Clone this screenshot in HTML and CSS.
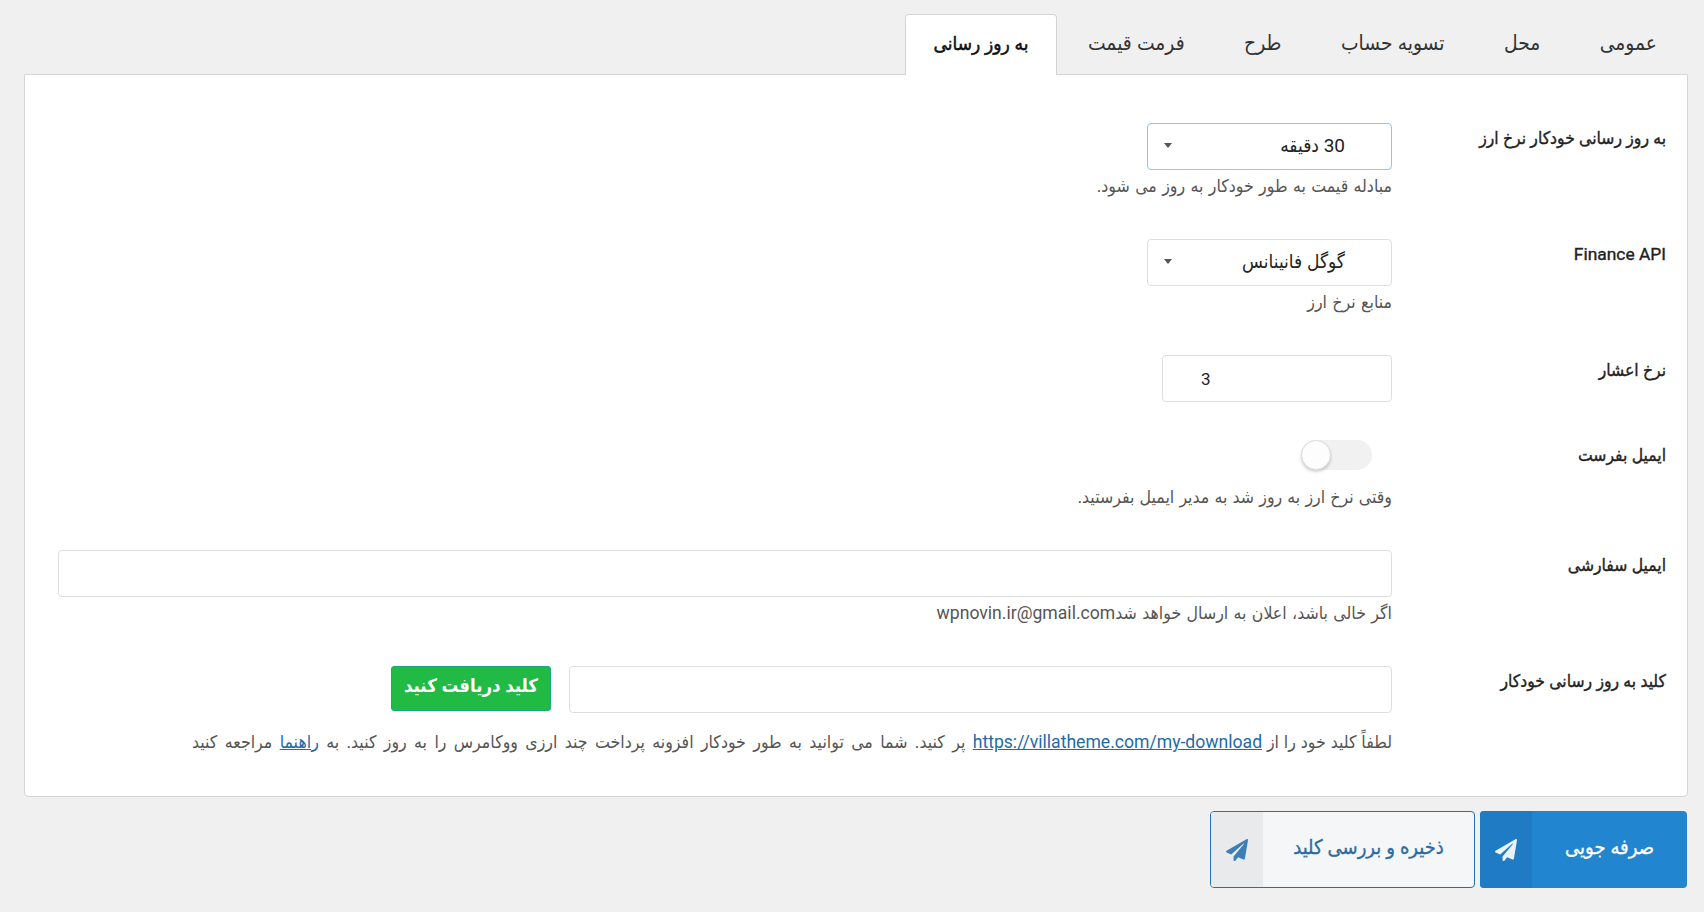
FILE: index.html
```html
<!DOCTYPE html>
<html lang="fa" dir="rtl">
<head>
<meta charset="utf-8">
<title>تنظیمات</title>
<link rel="stylesheet" href="styles.css">
</head>
<body>
<div class="wrap">
  <nav class="tabs">
    <a class="tab">عمومی</a>
    <a class="tab">محل</a>
    <a class="tab">تسویه حساب</a>
    <a class="tab">طرح</a>
    <a class="tab">فرمت قیمت</a>
    <a class="tab active">به روز رسانی</a>
  </nav>
  <section class="panel">
    <div class="row">
      <div class="label">به روز رسانی خودکار نرخ ارز</div>
      <div class="field">
        <div class="select focus"><span>30 دقیقه</span><i class="caret"></i></div>
        <p class="desc">مبادله قیمت به طور خودکار به روز می شود.</p>
      </div>
    </div>
    <div class="row">
      <div class="label">Finance API</div>
      <div class="field">
        <div class="select"><span>گوگل فانینانس</span><i class="caret"></i></div>
        <p class="desc">منابع نرخ ارز</p>
      </div>
    </div>
    <div class="row row-compact">
      <div class="label">نرخ اعشار</div>
      <div class="field">
        <input class="input number" type="text" value="3" dir="ltr">
      </div>
    </div>
    <div class="row">
      <div class="label">ایمیل بفرست</div>
      <div class="field">
        <div class="toggle"><i class="knob"></i></div>
        <p class="desc desc-toggle">وقتی نرخ ارز به روز شد به مدیر ایمیل بفرستید.</p>
      </div>
    </div>
    <div class="row">
      <div class="label">ایمیل سفارشی</div>
      <div class="field">
        <input class="input wide" type="text">
        <p class="desc">اگر خالی باشد، اعلان به ارسال خواهد شدwpnovin.ir@gmail.com</p>
      </div>
    </div>
    <div class="row last">
      <div class="label">کلید به روز رسانی خودکار</div>
      <div class="field">
        <div class="keyline">
          <input class="input key" type="text">
          <a class="getkey">کلید دریافت کنید</a>
        </div>
        <p class="desc desc-key"><span class="lead">لطفاً کلید خود را از </span><a class="link">https://villatheme.com/my-download</a> پر کنید. شما می توانید به طور خودکار افزونه پرداخت چند ارزی ووکامرس را به روز کنید. به <a class="link">راهنما</a> مراجعه کنید</p>
      </div>
    </div>
  </section>
  <div class="actions">
    <button class="btn primary"><span class="btn-text">صرفه جویی</span><span class="btn-icon"><svg viewBox="0 0 512 512" class="plane"><path d="M476 3.2L12.5 270.6c-18.1 10.4-15.8 35.6 2.2 43.2L121 358.4l287.3-253.2c5.5-4.9 13.3 2.6 8.6 8.3L176 407v80.5c0 23.6 28.5 32.9 42.5 15.8L282 426l124.6 52.2c14.2 6 30.4-2.9 33-18.2l72-432C515 7.8 493.3-6.8 476 3.2z"/></svg></span></button>
    <button class="btn secondary"><span class="btn-text">ذخیره و بررسی کلید</span><span class="btn-icon"><svg viewBox="0 0 512 512" class="plane"><path d="M476 3.2L12.5 270.6c-18.1 10.4-15.8 35.6 2.2 43.2L121 358.4l287.3-253.2c5.5-4.9 13.3 2.6 8.6 8.3L176 407v80.5c0 23.6 28.5 32.9 42.5 15.8L282 426l124.6 52.2c14.2 6 30.4-2.9 33-18.2l72-432C515 7.8 493.3-6.8 476 3.2z"/></svg></span></button>
  </div>
</div>
</body>
</html>
```
FILE: styles.css
```css
* { box-sizing: border-box; }
html, body { margin: 0; height: 100%; }
body {
  background: #f0f0f1;
  font-family: Roboto, "DejaVu Sans Condensed", "DejaVu Sans", sans-serif;
  font-size: 16px;
  color: #222;
  overflow: hidden;
}
.wrap { width: 1704px; padding: 14px 16px 0 24px; }
.tabs { display: flex; gap: 1.5px; height: 61px; position: relative; z-index: 1; padding-right: 2px; }
.tab {
  padding: 0 28px;
  height: 61px;
  line-height: 57px;
  font-size: 20.8px;
  color: #333;
  border: 1px solid transparent;
  border-bottom: 0;
  border-radius: 4px 4px 0 0;
}
.tab.active { background: #fff; border-color: #d4d4d5; color: #111; font-size: 19px; -webkit-text-stroke: .5px #111; }
.panel {
  background: #fff;
  border: 1px solid #d4d4d5;
  border-radius: 0 0 4px 4px;
  margin-top: -1px;
  padding: 48px 21px 42px 33px;
  height: 723px;
}
.row { display: flex; margin-bottom: 41px; }
.row.row-compact { margin-bottom: 38px; }
.row.last { margin-bottom: 0; }
.label {
  width: 274px;
  flex: none;
  font-size: 17.4px;
  color: #222;
  line-height: 24px;
  padding-top: 3px;
  -webkit-text-stroke: .35px #222;
}
.field { flex: 1; min-width: 0; }
.select {
  width: 245px;
  height: 47px;
  border: 1px solid #dedede;
  border-radius: 4px;
  background: #fff;
  display: flex;
  align-items: center;
  justify-content: space-between;
  padding: 0 46px 3px 16px;
  font-size: 19px;
  color: #222;
}
.select.focus { border-color: #96c8da; }
.caret { width: 0; height: 0; border: 4px solid transparent; border-top: 5px solid #555; border-bottom: 0; }
.desc { margin: 4px 0 0; font-size: 17.6px; line-height: 24px; color: #555; word-spacing: 1px; }
.desc.desc-toggle { margin-top: 15px; word-spacing: .8px; }
.desc.desc-key { margin-top: 17px; word-spacing: 3px; }
.lead { word-spacing: .5px; }
.input {
  display: block;
  height: 47px;
  border: 1px solid #dedede;
  border-radius: 4px;
  background: #fff;
  font: 17px Roboto, sans-serif;
  color: #222;
  outline: none;
}
.number { width: 230px; padding: 0 0 0 38px; }
.wide { width: 100%; }
.key { width: 823px; }
.toggle { width: 71px; height: 30px; border-radius: 15px; background: #f1f1f1; margin-right: 20px; position: relative; }
.knob { position: absolute; top: 0; right: 41px; width: 30px; height: 30px; border-radius: 50%; background: #fdfdfd; border: 1px solid #ddd; box-shadow: 0 2px 3px rgba(0,0,0,.18); }
.keyline { display: flex; gap: 18px; align-items: flex-start; }
.getkey {
  width: 160px;
  height: 45px;
  background: #21ba45;
  border: 1px solid #16ab7a;
  border-radius: 3px;
  color: #fff;
  font-weight: 700;
  font-size: 18.5px;
  line-height: 39px;
  text-align: center;
}
.link { color: #1e6ba8; text-decoration: underline; }
.actions { display: flex; gap: 5px; margin-top: 14px; padding-right: 1px; }
.btn {
  height: 77px;
  display: flex;
  align-items: stretch;
  padding: 0;
  border-radius: 4px;
  font: 400 20px Roboto, "DejaVu Sans Condensed", sans-serif;
  -webkit-text-stroke: .3px currentColor;
  overflow: hidden;
  cursor: pointer;
}
.btn-text { flex: 1; display: flex; align-items: center; justify-content: center; padding-bottom: 6px; }
.btn-icon { display: flex; align-items: center; justify-content: center; width: 52px; }
.plane { width: 22px; height: 22px; fill: currentColor; }
.primary { width: 207px; background: #2185d0; border: 0; color: #fff; }
.primary .btn-icon { background: #1f7bc4; color: #e8f2fa; }
.secondary { width: 265px; background: #f5f6f7; border: 1px solid #2271b1; color: #2a6ba3; }
.secondary .btn-icon { background: #e9eaeb; color: #3c7fb8; }
```
